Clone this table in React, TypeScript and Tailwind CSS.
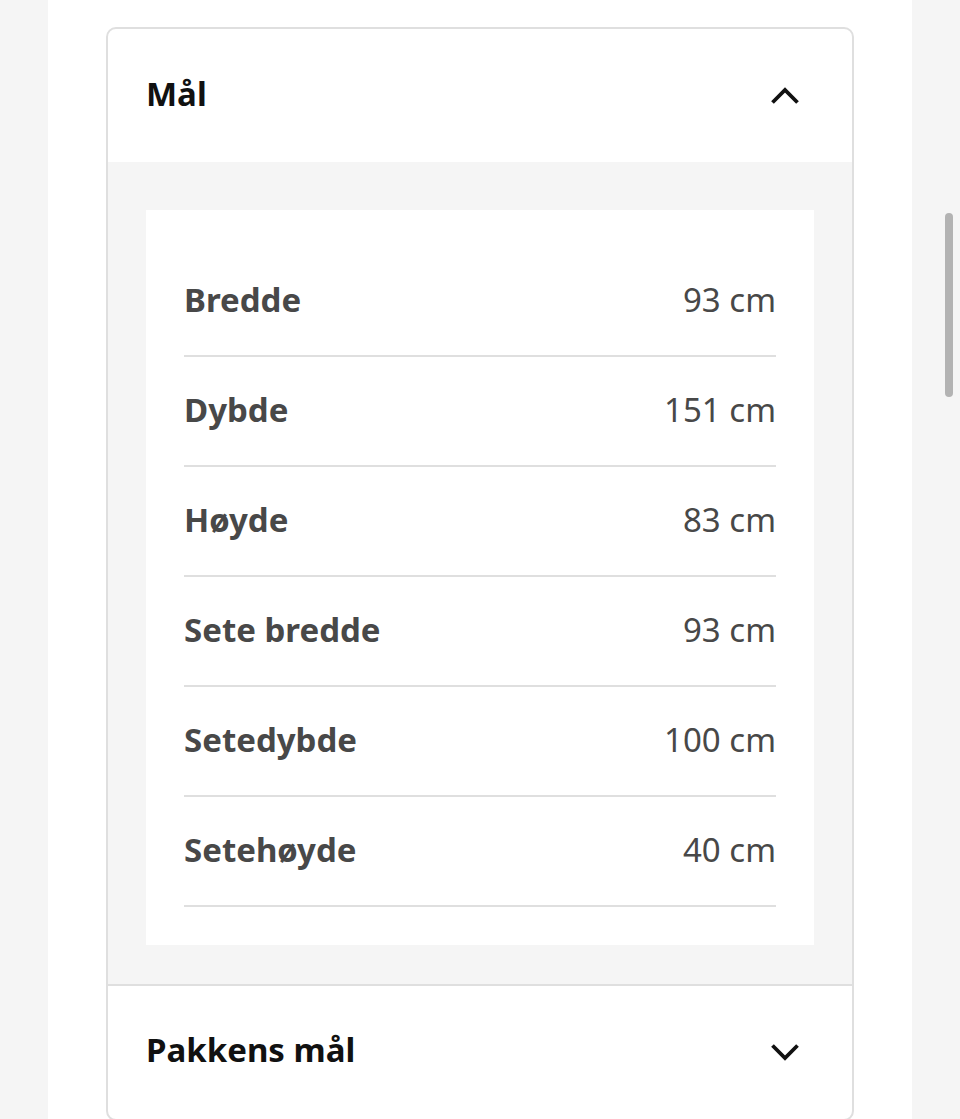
import React from "react";

const rows: [string, string][] = [
  ["Bredde", "93 cm"],
  ["Dybde", "151 cm"],
  ["Høyde", "83 cm"],
  ["Sete bredde", "93 cm"],
  ["Setedybde", "100 cm"],
  ["Setehøyde", "40 cm"],
];

function Chevron({ up }: { up?: boolean }) {
  return (
    <svg width="30" height="18" viewBox="0 0 30 18" fill="none">
      {up ? (
        <path d="M2.5 15.5 L15 3 L27.5 15.5" stroke="#111111" strokeWidth="3.8" strokeLinejoin="miter" />
      ) : (
        <path d="M2.5 2.5 L15 15 L27.5 2.5" stroke="#111111" strokeWidth="3.8" strokeLinejoin="miter" />
      )}
    </svg>
  );
}

export default function App() {
  return (
    <div
      className="relative flex justify-center bg-[#f5f5f5] h-[1119px] overflow-hidden"
      style={{ fontFamily: '"Noto Sans", "Open Sans", sans-serif' }}
    >
      <div className="w-[864px] bg-white pt-[27px] px-[58px]">
        <div className="border-2 border-[#dfdfdf] rounded-[10px] overflow-hidden">
          <div className="h-[133px] flex items-center justify-between pl-[38px] pr-[52px]">
            <span className="text-[33px] font-bold text-[#111111] leading-none -mt-[4px]">Mål</span>
            <Chevron up />
          </div>
          <div className="bg-[#f5f5f5] px-[38px] pt-[48px] pb-[39px]">
            <div className="bg-white px-[38px] pt-[37px] pb-[38px]">
              {rows.map(([k, v]) => (
                <div
                  key={k}
                  className="h-[110px] flex items-center justify-between border-b-2 border-[#dfdfdf] text-[#484848] text-[33px] leading-none pb-[3px]"
                >
                  <span className="font-bold">{k}</span>
                  <span>{v}</span>
                </div>
              ))}
            </div>
          </div>
          <div className="border-t-2 border-[#dfdfdf] h-[135px] flex items-center justify-between pl-[38px] pr-[52px]">
            <span className="text-[33px] font-bold text-[#111111] leading-none -mt-[6px]">Pakkens mål</span>
            <div className="-mt-[2px]">
              <Chevron />
            </div>
          </div>
        </div>
      </div>
      <div className="absolute left-[945px] top-[213px] w-[8px] h-[184px] rounded-full bg-[#b3b3b3]" />
    </div>
  );
}
